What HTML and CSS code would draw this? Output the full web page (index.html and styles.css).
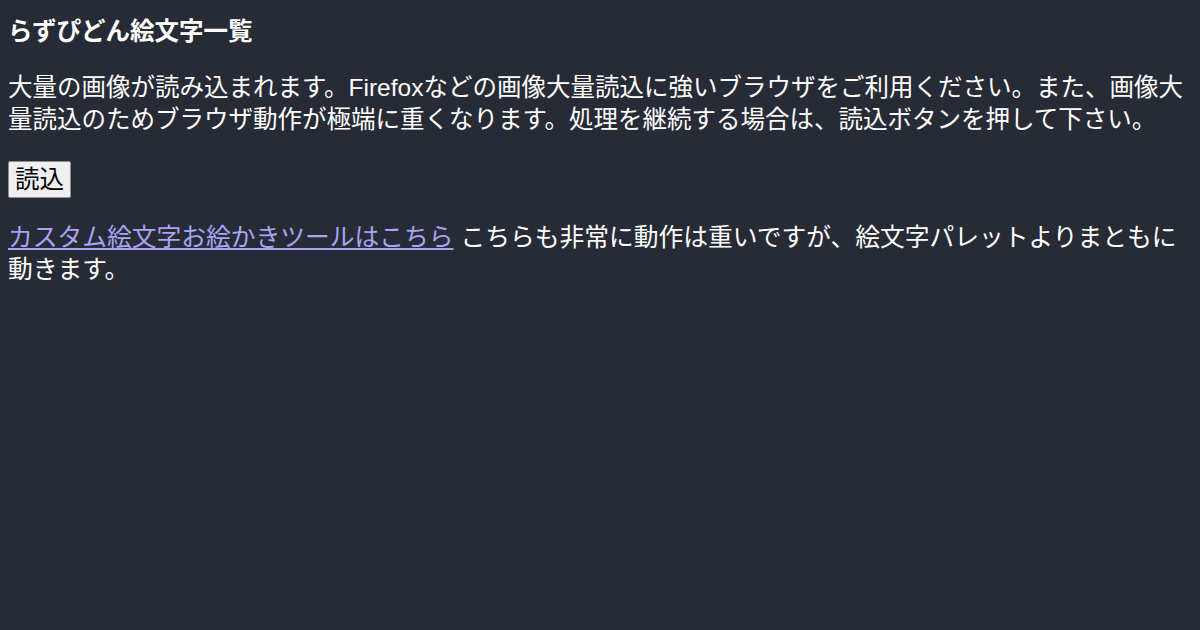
FILE: index.html
```html
<!DOCTYPE html>
<html lang="ja">
<head>
    <meta charset="UTF-8">
    <meta name="viewport" content="width=device-width, initial-scale=1.0">
    <title>らずぴどん絵文字一覧</title>
    <link rel="stylesheet" href="styles.css">
</head>
<body>
    <div class="title">らずぴどん絵文字一覧</div>

    <p class="notice">大量の画像が読み込まれます。Firefoxなどの画像大量読込に強いブラウザをご利用ください。また、画像大量読込のためブラウザ動作が極端に重くなります。処理を継続する場合は、読込ボタンを押して下さい。</p>

    <button class="load-btn">読込</button>

    <p class="tool-link"><a href="#">カスタム絵文字お絵かきツールはこちら</a> こちらも非常に動作は重いですが、絵文字パレットよりまともに動きます。</p>
</body>
</html>
```

FILE: styles.css
```css
body {
    margin: 0;
    padding: 16px 8px;
    background-color: #272b35;
    color: #ffffff;
    font-family: "Liberation Sans", "Noto Sans CJK JP", sans-serif;
    font-size: 24.5px;
    line-height: 32px;
}
.title {
    font-weight: bold;
}
.notice {
    margin: 24px 0 25px;
}
.load-btn {
    display: block;
    height: 37px;
    padding: 0 6px;
    font-family: "Liberation Sans", "Noto Sans CJK JP", sans-serif;
    font-size: 24.5px;
    line-height: 30px;
    color: #000;
    background-color: #efefef;
    border: 1px solid #8f8f8f;
    border-radius: 2px;
}
.tool-link {
    margin: 24px 0 0;
    font-size: 24.75px;
}
.tool-link a {
    color: #a8a4f4;
}
```
